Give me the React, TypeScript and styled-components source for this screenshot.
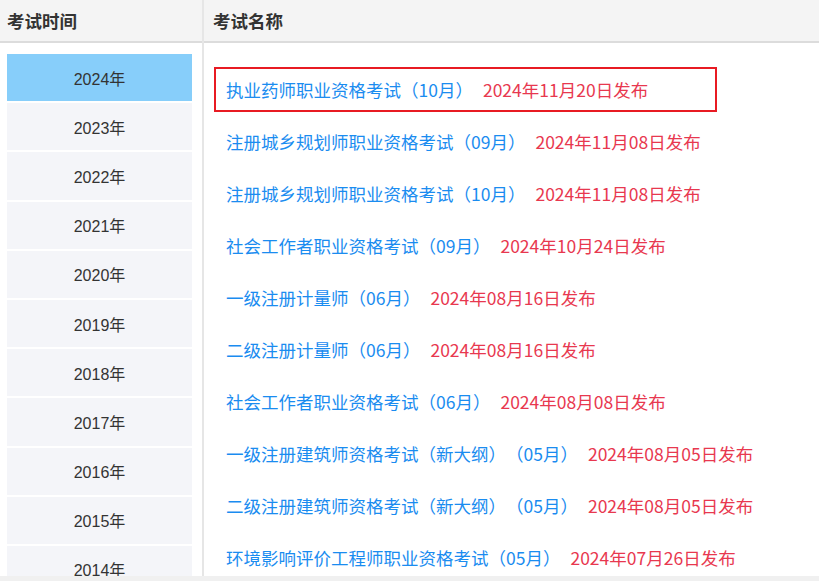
import React from "react";
import styled, { createGlobalStyle } from "styled-components";

const GlobalStyle = createGlobalStyle`
  body {
    margin: 0;
    background: #f0f0f0;
    font-family: "Liberation Sans", Arial, "Noto Sans CJK SC", sans-serif;
  }
`;

const Page = styled.div`
  display: flex;
  height: 576px;
  background: #fff;
  overflow: hidden;
`;

const Column = styled.div<{ $side?: boolean }>`
  display: flex;
  flex-direction: column;
  ${(p) => (p.$side ? "width: 202px; flex: none; border-right: 2px solid #e6e6e6;" : "flex: 1;")}
`;

const HeadCell = styled.div<{ $pad: number }>`
  height: 41px;
  flex: none;
  display: flex;
  align-items: center;
  padding-left: ${(p) => p.$pad}px;
  background: #f4f4f4;
  border-bottom: 2px solid #dcdcdc;
  font-size: 17.5px;
  font-weight: bold;
  color: #333;
`;

const YearList = styled.div`
  display: flex;
  flex-direction: column;
  gap: 2px;
  padding: 11px 0 0 7px;
`;

const Year = styled.div<{ $active?: boolean }>`
  width: 185px;
  height: 47.2px;
  flex: none;
  display: flex;
  align-items: center;
  justify-content: center;
  font-size: 16px;
  color: #333;
  background: ${(p) => (p.$active ? "#87cefa" : "#f4f5f9")};
  cursor: pointer;
`;

const ExamList = styled.div`
  display: flex;
  flex-direction: column;
  gap: 7px;
  padding: 24px 0 0 10px;
`;

const Exam = styled.div<{ $active?: boolean }>`
  width: 503px;
  height: 45px;
  flex: none;
  box-sizing: border-box;
  display: flex;
  align-items: center;
  padding-left: 10px;
  border: 2px solid ${(p) => (p.$active ? "#e81b23" : "transparent")};
  font-size: 17.5px;
  white-space: nowrap;
  text-spacing-trim: space-all;
  font-family: "Noto Sans CJK SC", sans-serif;
`;

const ExamName = styled.span`
  color: #1a8cf0;
`;

const ExamDate = styled.span`
  color: #e8384f;
  margin-left: 10px;
`;

const years = ["2024", "2023", "2022", "2021", "2020", "2019", "2018", "2017", "2016", "2015", "2014"];

const exams = [
  ["执业药师职业资格考试（10月）", "2024年11月20日发布"],
  ["注册城乡规划师职业资格考试（09月）", "2024年11月08日发布"],
  ["注册城乡规划师职业资格考试（10月）", "2024年11月08日发布"],
  ["社会工作者职业资格考试（09月）", "2024年10月24日发布"],
  ["一级注册计量师（06月）", "2024年08月16日发布"],
  ["二级注册计量师（06月）", "2024年08月16日发布"],
  ["社会工作者职业资格考试（06月）", "2024年08月08日发布"],
  ["一级注册建筑师资格考试（新大纲）（05月）", "2024年08月05日发布"],
  ["二级注册建筑师资格考试（新大纲）（05月）", "2024年08月05日发布"],
  ["环境影响评价工程师职业资格考试（05月）", "2024年07月26日发布"],
];

export default function App() {
  return (
    <>
      <GlobalStyle />
      <Page>
        <Column $side>
          <HeadCell $pad={7}>考试时间</HeadCell>
          <YearList>
            {years.map((y, i) => (
              <Year key={y} $active={i === 0}>
                {y}年
              </Year>
            ))}
          </YearList>
        </Column>
        <Column>
          <HeadCell $pad={9}>考试名称</HeadCell>
          <ExamList>
            {exams.map(([name, date], i) => (
              <Exam key={name + i} $active={i === 0}>
                <ExamName>{name}</ExamName>
                <ExamDate>{date}</ExamDate>
              </Exam>
            ))}
          </ExamList>
        </Column>
      </Page>
    </>
  );
}
